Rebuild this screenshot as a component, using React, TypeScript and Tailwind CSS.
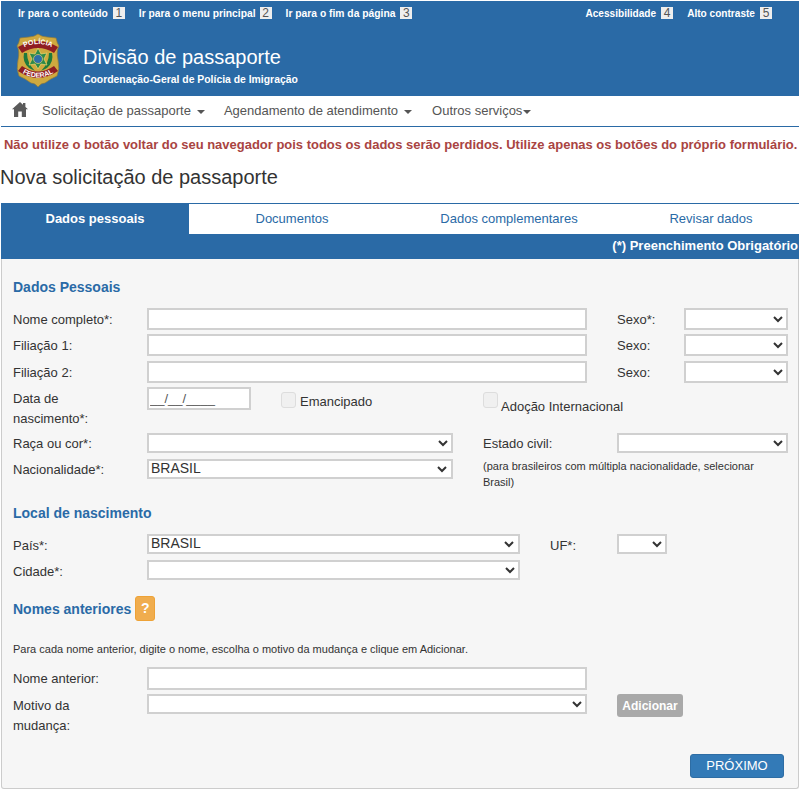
import React from 'react';

const inputCls = 'block bg-white border-2 border-[#d0d0d0] text-[13px] text-[#555] px-px outline-none';
const selectCls = 'block bg-white border-2 border-[#d0d0d0] text-[14px] text-[#333] h-[20px] outline-none';
const labelCls = 'text-[13px] leading-[20px] text-[#333]';

function Key({ n, gap = 'ml-[5px]' }: { n: number; gap?: string }): React.JSX.Element {
    return <span className={`${gap} inline-block w-[12px] h-[12px] bg-[#eee] text-[#555] text-[12px] leading-[12px] font-normal text-center`}>{n}</span>;
}

function Caret({ gap = 'ml-[6px]' }: { gap?: string }): React.JSX.Element {
    return <span className={`${gap} inline-block align-middle w-0 h-0 border-x-[4px] border-x-transparent border-t-[4px] border-t-[#555]`} />;
}

function Badge(): React.JSX.Element {
    return (
        <svg width="44" height="55" viewBox="0 0 44 55">
            <path d="M4 5 L13 4 Q18 4 22 1 Q26 4 31 4 L40 5 Q41 10 43 13 Q40 18 42 27 Q44 36 41 43 Q34 46 29 50 Q25 50 22 54 Q19 50 15 50 Q10 46 3 43 Q0 36 2 27 Q4 18 1 13 Q3 10 4 5 Z" fill="#cfa93f" stroke="#8d7a3c" strokeWidth="0.7" />
            <path d="M2 14 Q22 2 42 14 L38 20 Q22 10 6 20 Z" fill="#8f1d22" />
            <path id="badge-top" d="M5 16 Q22 6 39 16" fill="none" />
            <text fontSize="7" fontWeight="700" fill="#fff" fontFamily="Liberation Sans" textAnchor="middle"><textPath href="#badge-top" startOffset="50%">POLÍCIA</textPath></text>
            <path d="M2 38 Q22 52 42 38 L38 33 Q22 44 6 33 Z" fill="#8f1d22" />
            <path id="badge-bottom" d="M5 39 Q22 50 39 39" fill="none" />
            <text fontSize="7" fontWeight="700" fill="#fff" fontFamily="Liberation Sans" textAnchor="middle"><textPath href="#badge-bottom" startOffset="50%">FEDERAL</textPath></text>
            <path d="M8 20 Q6 29 13 35 L19 38 Q11 30 11 20 Z" fill="#1e7a3c" />
            <path d="M36 20 Q38 29 31 35 L25 38 Q33 30 33 20 Z" fill="#1e7a3c" />
            <path d="M22 15 L25 21 L31 20 L28 26 L31 32 L25 31 L22 36 L19 31 L13 32 L16 26 L13 20 L19 21 Z" fill="#2c8a4a" stroke="#e6d26a" strokeWidth="0.8" />
            <circle cx="22" cy="26" r="4.5" fill="#2d6fa8" stroke="#e6d26a" strokeWidth="0.7" />
        </svg>
    );
}

function TextRow({ label }: { label: string }): React.JSX.Element {
    return (
        <div className="flex">
            <label className={`w-[134px] shrink-0 pt-[2px] ${labelCls}`}>{label}</label>
            <input className={`${inputCls} w-[440px] h-[22px]`} />
        </div>
    );
}

function SexoRow({ label, className = '' }: { label: string; className?: string }): React.JSX.Element {
    return (
        <div className={`flex ${className}`}>
            <label className={`w-[67px] pt-[2px] ${labelCls}`}>{label}</label>
            <select className={`${selectCls} w-[104px] !h-[22px]`} />
        </div>
    );
}

// select com valor: o texto fica mais a esquerda que no nativo
function BrasilSelect({ width }: { width: string }): React.JSX.Element {
    return (
        <div className={`relative ${width}`}>
            <select className={`${selectCls} w-full appearance-none pl-[2px] leading-[14px] pb-[2px]`}><option>BRASIL</option></select>
            <svg className="absolute right-[6px] top-[7px] pointer-events-none" width="10" height="7" viewBox="0 0 10 7" fill="none" stroke="#333" strokeWidth="2">
                <path d="M1 1 L5 5 L9 1" />
            </svg>
        </div>
    );
}

function Section({ children, className = '' }: { children: React.ReactNode; className?: string }): React.JSX.Element {
    return <h3 className={`text-[14px] leading-[20px] font-bold text-[#2a6aa6] ${className}`}>{children}</h3>;
}

function CheckBox({ className = '' }: { className?: string }): React.JSX.Element {
    return <span className={`block w-[15px] h-[16px] bg-[#f0f0f0] border border-[#ddd] rounded-[3px] ${className}`} />;
}

export default function App(): React.JSX.Element {
    return (
        <div className="w-[799px] h-[790px] overflow-hidden bg-white font-['Liberation_Sans',Arial,sans-serif] text-[#333]">
            <header className="mt-px ml-px bg-[#2a6aa6] h-[95px] text-white">
                <div className="flex justify-between h-[25px] pt-[6px] pl-[17px] pr-[27px] text-[10.3px] leading-[14px] font-bold">
                    <div className="flex gap-[14px]">
                        <span>Ir para o conteúdo<Key n={1} /></span>
                        <span>Ir para o menu principal<Key n={2} gap="ml-[4px]" /></span>
                        <span>Ir para o fim da página<Key n={3} /></span>
                    </div>
                    <div className="flex gap-[14px] text-[10.1px]">
                        <span>Acessibilidade<Key n={4} /></span>
                        <span>Alto contraste<Key n={5} /></span>
                    </div>
                </div>
                <div className="flex pl-[15px] pt-[7px]">
                    <Badge />
                    <div className="ml-[23px] pt-[12px]">
                        <div className="text-[20px] leading-[24px]">Divisão de passaporte</div>
                        <div className="text-[10.4px] leading-[14px] font-bold mt-[4px]">Coordenação-Geral de Polícia de Imigração</div>
                    </div>
                </div>
            </header>
            <nav className="ml-px flex items-center h-[31px] border-b border-[#2a6aa6] text-[13px] text-[#555]">
                <svg className="ml-[11px] mb-[4px]" width="16" height="15" viewBox="0 0 16 15" fill="#5a5a5a">
                    <path d="M8 0 L11 2.7 L11 1 L13.4 1 L13.4 4.9 L16 7.3 L14 7.3 L14 15 L9.8 15 L9.8 9.6 L6.2 9.6 L6.2 15 L2 15 L2 7.3 L0 7.3 Z" />
                </svg>
                <span className="ml-[14px]">Solicitação de passaporte<Caret /></span>
                <span className="ml-[19px]">Agendamento de atendimento<Caret /></span>
                <span className="ml-[20px]">Outros serviços<Caret gap="ml-px" /></span>
            </nav>
            <p className="mt-[8px] ml-[4px] whitespace-nowrap text-[12.97px] leading-[20px] font-bold text-[#a94442]">Não utilize o botão voltar do seu navegador pois todos os dados serão perdidos. Utilize apenas os botões do próprio formulário.</p>
            <h1 className="mt-[10px] text-[20px] leading-[24px] text-[#333]">Nova solicitação de passaporte</h1>

            <div className="ml-px mt-[14px] w-[798px]">
                <div className="flex h-[31px] border-t border-[#2a6aa6] text-[13px] text-[#2a6aa6] text-center leading-[29px]">
                    <div className="w-[188px] bg-[#2a6aa6] text-white font-bold">Dados pessoais</div>
                    <div className="w-[206px]">Documentos</div>
                    <div className="w-[228px]">Dados complementares</div>
                    <div className="w-[176px]">Revisar dados</div>
                </div>
                <div className="h-[25px] bg-[#2a6aa6] text-white text-right text-[13px] leading-[24px] font-bold pr-px">(*) Preenchimento Obrigatório</div>
                <div className="h-[530px] bg-[#f6f6f6] border-x border-b border-[#ccc] rounded-b-[3px] pl-[11px] pt-[18px]">
                    <Section>Dados Pessoais</Section>
                    <div className="mt-[11px] flex">
                        <div className="flex flex-col gap-[4px]">
                            <TextRow label="Nome completo*:" />
                            <TextRow label="Filiação 1:" />
                            <div className="mt-px"><TextRow label="Filiação 2:" /></div>
                        </div>
                        <div className="ml-[30px] flex flex-col gap-[4px]">
                            <SexoRow label="Sexo*:" />
                            <SexoRow label="Sexo:" />
                            <SexoRow label="Sexo:" className="mt-px" />
                        </div>
                    </div>
                    <div className="mt-[4px] flex h-[46px]">
                        <label className="w-[134px] shrink-0 text-[13px] leading-[20px] pt-[2px]">Data de<br />nascimento*:</label>
                        <input className={`${inputCls} w-[104px] h-[23px]`} defaultValue="__/__/____" />
                        <div className="ml-[30px] w-[202px] flex">
                            <CheckBox className="mt-[5px]" />
                            <span className={`ml-[4px] mt-[5px] ${labelCls}`}>Emancipado</span>
                        </div>
                        <CheckBox className="mt-[5px]" />
                        <span className={`ml-[3px] mt-[10px] ${labelCls}`}>Adoção Internacional</span>
                    </div>
                    <div className="flex">
                        <div className="flex flex-col gap-[6px]">
                            <div className="flex">
                                <label className={`w-[134px] h-[20px] pt-px ${labelCls}`}>Raça ou cor*:</label>
                                <select className={`${selectCls} w-[306px]`} />
                            </div>
                            <div className="flex">
                                <label className={`w-[134px] h-[20px] pt-px ${labelCls}`}>Nacionalidade*:</label>
                                <BrasilSelect width="w-[306px]" />
                            </div>
                        </div>
                        <div className="ml-[30px] w-[305px]">
                            <div className="flex">
                                <label className={`w-[134px] h-[20px] pt-px ${labelCls}`}>Estado civil:</label>
                                <select className={`${selectCls} w-[171px]`} />
                            </div>
                            <p className="mt-[5px] text-[11px] leading-[16px] w-[290px]">(para brasileiros com múltipla nacionalidade, selecionar Brasil)</p>
                        </div>
                    </div>
                    <Section className="mt-[13px]">Local de nascimento</Section>
                    <div className="mt-[11px] flex">
                        <label className={`w-[134px] h-[20px] pt-[2px] ${labelCls}`}>País*:</label>
                        <BrasilSelect width="w-[373px]" />
                        <label className={`ml-[30px] w-[67px] h-[20px] pt-[2px] ${labelCls}`}>UF*:</label>
                        <select className={`${selectCls} w-[50px]`} />
                    </div>
                    <div className="mt-[6px] flex">
                        <label className={`w-[134px] h-[20px] pt-[2px] ${labelCls}`}>Cidade*:</label>
                        <select className={`${selectCls} w-[373px]`} />
                    </div>
                    <div className="mt-[16px] flex items-center h-[25px]">
                        <Section>Nomes anteriores</Section>
                        <span className="ml-[4px] w-[20px] h-[25px] bg-[#f0ad4e] border border-[#eea236] rounded-[3px] text-white text-[14px] font-bold text-center leading-[23px]">?</span>
                    </div>
                    <p className="mt-[20px] text-[11px] leading-[16px]">Para cada nome anterior, digite o nome, escolha o motivo da mudança e clique em Adicionar.</p>
                    <div className="mt-[10px] flex">
                        <label className={`w-[134px] pt-[2px] ${labelCls}`}>Nome anterior:</label>
                        <input className={`${inputCls} w-[440px] h-[23px]`} />
                    </div>
                    <div className="mt-[4px] flex">
                        <label className="w-[134px] text-[13px] leading-[20px] pt-[2px]">Motivo da<br />mudança:</label>
                        <select className={`${selectCls} w-[440px]`} />
                        <button className="ml-[30px] w-[66px] h-[23px] bg-[#a9a9a9] rounded-[3px] text-white text-[12px] font-bold">Adicionar</button>
                    </div>
                    <div className="mt-[18px] flex justify-end pr-[14px]">
                        <button className="w-[94px] h-[24px] bg-[#337ab7] border border-[#2e6da4] rounded-[3px] text-white text-[13px]">PRÓXIMO</button>
                    </div>
                </div>
            </div>
        </div>
    );
}
